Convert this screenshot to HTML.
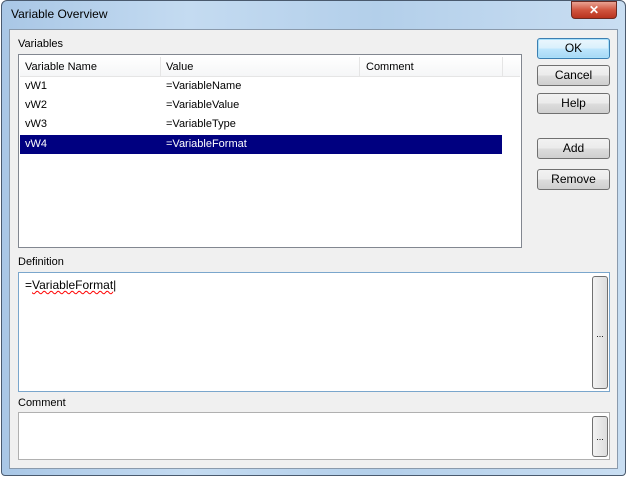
<!DOCTYPE html>
<html><head><style>
*{margin:0;padding:0;box-sizing:border-box}
body{width:627px;height:477px;overflow:hidden;background:#fff;font-family:"Liberation Sans",sans-serif;font-size:11px;color:#000;position:relative}
.frame{position:absolute;left:1px;top:0;width:625px;height:476px;border:1px solid #4a5a6e;border-radius:6px 6px 4px 4px;background:linear-gradient(90deg,#a9c7e6,#c4dbf1 30%,#b3cfea 60%,#c9def2);}
.title{position:absolute;left:11px;top:7px;font-size:12px;color:#000}
.close{position:absolute;left:571px;top:1px;width:46px;height:18px;border:1px solid #6b2a22;border-radius:0 0 4px 4px;background:linear-gradient(#e8a393,#d0553f 50%,#b8341f);color:#fff;font-weight:bold;text-align:center;font-size:12px;line-height:16px}
.client{position:absolute;left:9px;top:29px;width:609px;height:440px;background:#f0f0f0;border:1px solid #8a9aac}
.a{position:absolute}
.lbl{position:absolute;font-size:11px}
.box{position:absolute;background:#fff;border:1px solid #828790}
.btn{position:absolute;left:537px;width:73px;height:21px;border:1px solid #707070;border-radius:3px;background:linear-gradient(#f2f2f2,#ebebeb 50%,#dddddd 51%,#cfcfcf);text-align:center;line-height:19px;font-size:12px}
.row{position:absolute;left:20px;width:482px;height:19px;line-height:18px}
.row span{position:absolute}
.sb{position:absolute;left:592px;width:16px;border:1px solid #707070;border-radius:3px;background:linear-gradient(90deg,#f2f2f2,#ddd);text-align:center;font-size:9px}
</style></head><body>
<div class="frame"></div>
<div class="title">Variable Overview</div>
<div class="close">✕</div>
<div class="client"></div>
<div class="lbl" style="left:18px;top:38px">Variables</div>
<div class="box" style="left:18px;top:54px;width:504px;height:194px"></div>
<div class="a" style="left:20px;top:57px;width:500px;height:20px;background:linear-gradient(#fff,#f5f6f7);border-bottom:1px solid #e5e5e5"></div>
<div class="a" style="left:160px;top:57px;width:1px;height:20px;background:#e5e5e5"></div>
<div class="a" style="left:359px;top:57px;width:1px;height:20px;background:#e5e5e5"></div>
<div class="a" style="left:502px;top:57px;width:1px;height:20px;background:#e5e5e5"></div>
<div class="lbl" style="left:25px;top:61px">Variable Name</div>
<div class="lbl" style="left:166px;top:61px">Value</div>
<div class="lbl" style="left:366px;top:61px">Comment</div>
<div class="row" style="top:77px"><span style="left:5px">vW1</span><span style="left:146px">=VariableName</span></div>
<div class="row" style="top:96px"><span style="left:5px">vW2</span><span style="left:146px">=VariableValue</span></div>
<div class="row" style="top:115px"><span style="left:5px">vW3</span><span style="left:146px">=VariableType</span></div>
<div class="row" style="top:135px;background:#000080;color:#fff"><span style="left:5px">vW4</span><span style="left:146px">=VariableFormat</span></div>
<div class="btn" style="top:38px;border-color:#3c7fb1;background:linear-gradient(#eaf6fd,#d9f0fc 50%,#bee6fd 51%,#a7d9f5);box-shadow:inset 0 0 0 1px #a8e0fb">OK</div>
<div class="btn" style="top:65px">Cancel</div>
<div class="btn" style="top:93px">Help</div>
<div class="btn" style="top:138px">Add</div>
<div class="btn" style="top:169px">Remove</div>
<div class="lbl" style="left:18px;top:256px">Definition</div>
<div class="box" style="left:18px;top:272px;width:592px;height:120px;border-color:#7aa6cc"></div>
<div class="lbl" style="left:25px;top:278px;font-size:12px">=<span style="text-decoration:underline wavy red;text-decoration-thickness:1px">VariableFormat</span>|</div>
<div class="sb" style="top:276px;height:113px;padding-top:52px">...</div>
<div class="lbl" style="left:18px;top:397px">Comment</div>
<div class="box" style="left:18px;top:412px;width:592px;height:48px;border-color:#b0b0b0"></div>
<div class="sb" style="top:416px;height:41px;padding-top:15px">...</div>
</body></html>
